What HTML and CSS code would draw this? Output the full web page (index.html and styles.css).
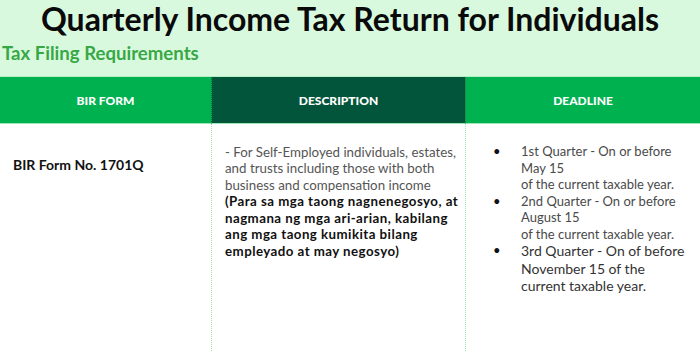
FILE: index.html
```html
<!DOCTYPE html>
<html lang="en">
<head>
<meta charset="utf-8">
<title>Quarterly Income Tax Return for Individuals</title>
<link rel="stylesheet" href="styles.css">
</head>
<body>
<header class="top">
  <h1 class="title">Quarterly Income Tax Return for Individuals</h1>
  <h2 class="subtitle">Tax Filing Requirements</h2>
</header>
<div class="table">
  <div class="th th-form">BIR FORM</div>
  <div class="th th-desc">DESCRIPTION</div>
  <div class="th th-deadline">DEADLINE</div>
  <div class="td td-form"><strong>BIR Form No. 1701Q</strong></div>
  <div class="td td-desc">
    <p class="desc-en">- For Self-Employed individuals, estates, and trusts including those with both business and compensation income</p>
    <p class="desc-fil">(Para sa mga taong nagnenegosyo, at nagmana ng mga ari-arian, kabilang ang mga taong kumikita bilang empleyado at may negosyo)</p>
  </div>
  <div class="td td-deadline">
    <ul class="list">
      <li><span class="item-text">1st Quarter - On or before<br>May 15<br>of the current taxable year.</span></li>
      <li><span class="item-text">2nd Quarter - On or before<br>August 15<br>of the current taxable year.</span></li>
      <li class="big"><span class="item-text">3rd Quarter - On of before November 15 of the current taxable year.</span></li>
    </ul>
  </div>
</div>
</body>
</html>
```
FILE: styles.css
```css
html, body {
  margin: 0;
  padding: 0;
  background: #ffffff;
}
body {
  font-family: Lato, "Open Sans", sans-serif;
  height: 351px;
  overflow: hidden;
}
.top {
  background: #d9f9de;
  height: 76px;
  display: flex;
  flex-direction: column;
}
.title {
  margin: 0;
  text-align: center;
  font-size: 32px;
  line-height: 37px;
  font-weight: 700;
  color: #0a0a0a;
}
.subtitle {
  margin: 4px 0 0 2px;
  font-size: 18.6px;
  line-height: 24px;
  font-weight: 700;
  color: #38a846;
}
.table {
  display: grid;
  grid-template-columns: 212px 253px 1fr;
  grid-template-rows: 47px 1fr;
  border-top: 1px solid #b4f0c4;
  height: 274px;
}
.th {
  display: flex;
  align-items: center;
  justify-content: center;
  color: #ffffff;
  font-size: 12px;
  font-weight: 900;
  border-bottom: 1px solid #9fe5b5;
}
.th-form { background: #00b14f; border-right: 1px dotted #0b6b43; }
.th-desc { background: #02553a; }
.th-deadline { background: #00b14f; border-left: 1px solid #1f8a55; }
.td {
  font-size: 13.3px;
  line-height: 16.4px;
  color: #555555;
}
.td-form {
  border-right: 1px dotted #9fe5b5;
  padding: 33px 0 0 13px;
  color: #111111;
  font-size: 14px;
}
.td-desc {
  padding: 20px 2px 0 13px;
}
.td-desc p { margin: 0; }
.desc-fil {
  color: #111111;
  font-weight: 700;
  letter-spacing: 0.45px;
  line-height: 16.6px;
}
.td-deadline {
  border-left: 1px dotted #9fe5b5;
  padding: 19px 10px 0 0;
}
.list {
  margin: 0;
  padding: 0 0 0 27px;
  list-style: none;
}
.list li {
  display: grid;
  grid-template-columns: 28px 1fr;
  color: #4a4a4a;
  font-size: 13px;
  line-height: 16.5px;
}
.list li::before {
  content: "\2022";
  color: #111111;
  font-size: 13px;
}
.list li.big {
  font-size: 14px;
  line-height: 17.5px;
  color: #333333;
}
```
